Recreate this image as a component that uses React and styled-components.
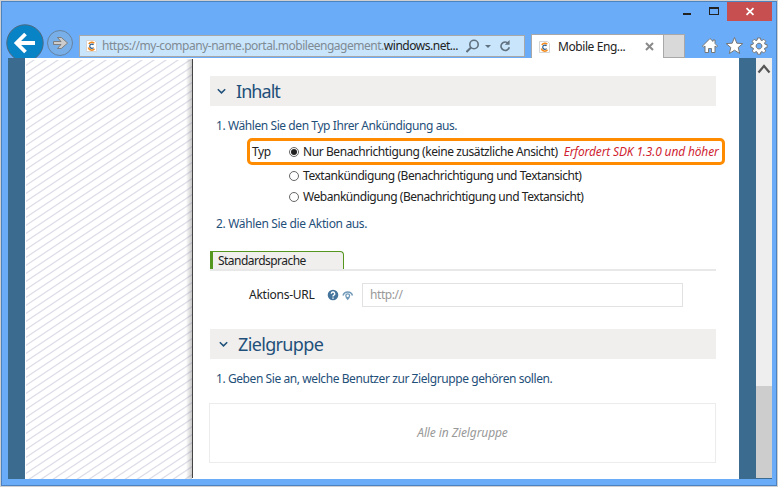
import React from 'react';
import styled, { createGlobalStyle } from 'styled-components';

const Global = createGlobalStyle`
  * { box-sizing: border-box; }
  body { margin: 0; font-family: "Noto Sans", "Open Sans", sans-serif; font-size: 12px; color: #222; }
`;

const Window = styled.div`
  width: 778px; height: 487px; display: flex; flex-direction: column;
  background: #6aacf7; border: 1px solid #d0d0d0; outline: 1px solid #4c82c0; outline-offset: -2px;
  overflow: hidden;
`;
const TitleBar = styled.div`
  height: 20px; display: flex; justify-content: flex-end; padding-right: 5px; flex: none;
`;
const WinButton = styled.div`
  width: ${p => p.$w}px; height: 20px; background: ${p => p.$bg || 'transparent'};
  svg { display: block; }
`;
const NavBar = styled.div`
  height: 37px; display: flex; flex: none; align-items: flex-start;
`;
const NavButtons = styled.svg`display: block; width: 78px; height: 37px; flex: none;`;
const AddressBar = styled.div`
  margin-top: 14px; width: 446px; height: 22px; background: #c9e5fc; border: 1px solid #a8a8a8;
  display: flex; align-items: center; padding-left: 6px; flex: none;
  svg { flex: none; }
`;
const Url = styled.div`width: 364px; margin-left: 5px; white-space: nowrap; flex: none;`;
const Host = styled.span`color: #222;`;
const BrowserTab = styled.div`
  margin: 13px 0 0 6px; width: 133px; height: 24px; background: #fff; border: 1px solid #a8a8a8; border-bottom: 0;
  display: flex; align-items: center; padding-left: 7px; flex: none;
`;
const TabTitle = styled.div`width: 95px; padding-left: 8px; flex: none;`;
const NewTab = styled.div`flex: none; margin-top: 13px; width: 21px; height: 24px; background: #d9d9d9; border: 1px solid #a8a8a8; border-left: 0;`;
const Tools = styled.svg`display: block; width: 70px; height: 20px; margin: 15px 0 0 15px; flex: none;`;

const Text = styled.span`
  font-size: ${p => p.$size || 12}px; letter-spacing: ${p => p.$ls ?? -0.42}px; color: ${p => p.$color || '#222'};
  font-style: ${p => (p.$italic ? 'italic' : 'normal')}; white-space: nowrap; line-height: 18px;
`;
const Requirement = styled(Text)`margin-left: 6px;`;

const Viewport = styled.div`height: 421px; margin: 0 5px 0 7px; display: flex; flex: none;`;
const SideBand = styled.div`width: 17px; background: #3b6c8f; flex: none;`;
const Hatch = styled.svg`display: block; width: 168px; height: 421px; background: #fff; flex: none;`;
const Page = styled.main`width: 546px; background: #fff; padding: 18px 0 0 17px; flex: none;`;
const SectionHead = styled.div`
  width: 506px; height: 30px; margin-top: ${p => p.$top || 0}px; background: #f0efee;
  display: flex; align-items: center; padding-left: ${p => p.$pad}px; gap: 10px;
  svg { flex: none; }
`;
const Step = styled.div`height: 18px; margin: ${p => p.$m}; display: flex;`;
const Options = styled.div`width: 478px; margin-left: 37px;`;
const Option = styled.label`
  height: 21px; display: flex; align-items: center; padding-left: 42px; gap: 4px;
`;
const Highlight = styled.div`
  height: 27px; border: 3px solid #ff8c00; border-radius: 5px; display: flex; align-items: center; padding-left: 2px;
`;
const TypeLabel = styled.div`width: 37px; display: flex; flex: none;`;
const Radio = styled.span`
  width: 10px; height: 10px; border: 1px solid #666; border-radius: 50%; flex: none; display: flex; margin-right: ${p => p.$gap || 0}px;
  &::before { content: ''; margin: auto; width: 6px; height: 6px; border-radius: 50%; background: ${p => (p.$on ? '#222' : 'transparent')}; }
`;
const LangTabs = styled.div`width: 506px; height: 20px; border-bottom: 2px solid #e9e8e8; margin-top: 18px;`;
const LangTab = styled.div`
  width: 134px; height: 18px; background: #f0efee; border: 1px solid #55961f; border-left-width: 3px; border-bottom: 0;
  border-top-right-radius: 4px; padding-left: 5px; display: flex;
`;
const Field = styled.div`height: 25px; margin: 11px 0 0 39px; display: flex; align-items: center;`;
const FieldLabel = styled.div`width: 78px; display: flex;`;
const Input = styled.div`width: 321px; height: 24px; margin-left: 8px; border: 1px solid #e2e2e2; padding-left: 7px; display: flex; align-items: center;`;
const Audience = styled.div`width: 507px; height: 60px; margin-left: -1px; border: 1px solid #ececec; display: flex; align-items: center; justify-content: center;`;
const ScrollBar = styled.div`width: 16px; height: 421px; background: #eee; display: flex; flex: none; flex-direction: column; justify-content: space-between;`;
const Thumb = styled.div`height: 93px; background: #cdcdcd; border-bottom: 1px solid #3b6c8f;`;

const NAVY = '#1f507a';

const Favicon = () => (
  <svg width="11" height="12" viewBox="0 0 11 12">
    <path d="M.5.5h8l2 2v9H.5z" fill="#fff" stroke="#d5d5d5" />
    <path d="M8.3 3.3A3.5 3.5 0 0 0 2.8 4M2.3 7.500A3.5 3.5 0 0 0 8.5 8.7" fill="none" stroke="#f28a1c" strokeWidth="1.5" />
    <path d="M7.5 4.9A2.1 2.1 0 1 0 7.5 7.5" fill="none" stroke="#295b8c" strokeWidth="1.2" />
  </svg>
);
const Chevron = () => (
  <svg width="9" height="7" viewBox="0 0 9 7"><path d="M.8 1.2l3.7 3.7 3.7-3.7" fill="none" stroke={NAVY} strokeWidth="1.5" /></svg>
);

export default function App() {
  return (
    <Window>
      <Global />
      <TitleBar>
        <WinButton $w={38}><svg width="38" height="20"><path d="M19 12h8v2h-8z" fill="#222" /></svg></WinButton>
        <WinButton $w={25}><svg width="25" height="20"><path d="M7 6h10v8H7zM8 8v5h8V8z" fillRule="evenodd" fill="#222" /></svg></WinButton>
        <WinButton $w={45} $bg="#c74f50"><svg width="45" height="20"><path d="M19.5 7.2l7 6.6m0-6.6l-7 6.6" stroke="#fff" strokeWidth="1.8" /></svg></WinButton>
      </TitleBar>
      <NavBar>
        <NavButtons viewBox="0 0 78 37">
          <circle cx="24" cy="22" r="18.2" fill="#0783c6" stroke="#4e6a80" />
          <path d="M34 22H16M24.5 13l-9 9 9 9" fill="none" stroke="#fff" strokeWidth="3.8" />
          <circle cx="59" cy="22" r="12.5" fill="#78afe8" stroke="#66839f" />
          <path d="M52.5 20.500h7.500l-3.500-4h3.800l6.300 5.500-6.300 5.500h-3.800l3.500-4h-7.500z" fill="#ccc" stroke="#777" strokeWidth=".9" />
        </NavButtons>
        <AddressBar>
          <Favicon />
          <Url><Text $color="#7f8b94" $ls={-0.48}>https://my-company-name.portal.mobileengagement.<Host>windows.net...</Host></Text></Url>
          <svg width="46" height="18" viewBox="0 0 46 18" fill="none" stroke="#60717f">
            <circle cx="8" cy="7.5" r="4.2" strokeWidth="1.6" /><path d="M5 10.500l-4.500 4.500" strokeWidth="2" />
            <path d="M19 8h6l-3 3z" fill="#60717f" stroke="none" />
            <path d="M42.300 6.400a4.200 4.200 0 1 0 1 3.800" strokeWidth="1.600" /><path d="M43.600 3v4.800h-4.800z" fill="#60717f" stroke="none" />
          </svg>
        </AddressBar>
        <BrowserTab>
          <Favicon />
          <TabTitle><Text $ls={-0.42}>Mobile Eng...</Text></TabTitle>
          <svg width="9" height="9" viewBox="0 0 9 9"><path d="M1 1l7 7m0-7L1 8" stroke="#8a8a8a" strokeWidth="2" /></svg>
        </BrowserTab>
        <NewTab />
        <Tools viewBox="0 0 70 20" fill="#fff" stroke="#777" strokeWidth="1">
          <path d="M2.500 10L10 2.500l3 2.900V4h2v3.500L17.500 10l-1 1.200L15 10v6.500h-3.500v-4h-3v4H5V10l-1.500 1.200z" />
          <path d="M34.500 1.500l2.300 5.700 6 .4-4.600 3.900 1.500 6-5.200-3.300-5.200 3.300 1.500-6-4.600-3.900 6-.4z" />
          <path fillRule="evenodd" d="M57.500 2h3l.4 2.200 1 .4 1.900-1.300 2 2-1.300 1.900.4 1 2.200.4v3l-2.200.4-.4 1 1.300 1.900-2 2-1.900-1.300-1 .4-.4 2.200h-3l-.4-2.200-1-.4-1.900 1.300-2-2 1.300-1.900-.4-1-2.200-.4v-3l2.200-.4.4-1-1.300-1.900 2-2 1.900 1.300 1-.4zM59 7.200a2.900 2.900 0 1 0 .01 0z" />
        </Tools>
      </NavBar>
      <Viewport>
        <SideBand />
        <Hatch>
          <defs>
            <pattern id="hatch" width="12" height="8" patternUnits="userSpaceOnUse">
              <path d="M-3 10L15 -2M-9 6L3 -2M9 10L21 2" stroke="#dedee9" strokeWidth="1.4" />
            </pattern>
            <linearGradient id="edge"><stop offset="0" stopColor="#777" stopOpacity="0" /><stop offset="1" stopColor="#777" stopOpacity=".4" /></linearGradient>
          </defs>
          <rect x="1" y="2" width="166" height="419" fill="url(#hatch)" />
          <rect x="161" y="1" width="6" height="420" fill="url(#edge)" />
          <rect x="167" y="1" width="1" height="419" fill="#444" />
        </Hatch>
        <Page>
          <SectionHead $pad={7}><Chevron /><Text $size={18} $ls={-0.95} $color={NAVY}>Inhalt</Text></SectionHead>
          <Step $m="11px 0 3px 6px"><Text $color={NAVY}>1. Wählen Sie den Typ Ihrer Ankündigung aus.</Text></Step>
          <Options>
            <Highlight>
              <TypeLabel><Text>Typ</Text></TypeLabel>
              <Radio $on $gap={4} />
              <Text>Nur Benachrichtigung (keine zusätzliche Ansicht)</Text>
              <Requirement $italic $ls={-0.15} $color="#d01f32">Erfordert SDK 1.3.0 und höher</Requirement>
            </Highlight>
            <Option><Radio /><Text $ls={-0.45}>Textankündigung (Benachrichtigung und Textansicht)</Text></Option>
            <Option><Radio /><Text $ls={-0.46}>Webankündigung (Benachrichtigung und Textansicht)</Text></Option>
          </Options>
          <Step $m="8px 0 0 6px"><Text $ls={-0.34} $color={NAVY}>2. Wählen Sie die Aktion aus.</Text></Step>
          <LangTabs><LangTab><Text $ls={-0.53}>Standardsprache</Text></LangTab></LangTabs>
          <Field>
            <FieldLabel><Text $ls={-0.25}>Aktions-URL</Text></FieldLabel>
            <svg width="27" height="12" viewBox="0 0 27 12">
              <circle cx="6" cy="6" r="5.3" fill="#45759c" />
              <path d="M4.300 4.700a1.700 1.700 0 1 1 2.500 1.500q-.8.4-.8 1.200M6 8.500v1.300" stroke="#fff" strokeWidth="1.4" fill="none" />
              <path d="M16 6.500a5 5 0 0 1 9.500 0" fill="none" stroke="#7199b8" strokeWidth="1.5" />
              <path d="M20.700 4.200a2.500 2.500 0 0 1 2.500 2.500q0 1.800-2.500 4.500-2.500-2.700-2.500-4.500a2.500 2.500 0 0 1 2.500-2.500z" fill="#6f98b8" />
              <circle cx="20.7" cy="6.8" r="1.2" fill="#fff" />
            </svg>
            <Input><Text $color="#999">http://</Text></Input>
          </Field>
          <SectionHead $pad={9} $top={22}><Chevron /><Text $size={18} $ls={-0.65} $color={NAVY}>Zielgruppe</Text></SectionHead>
          <Step $m="11px 0 15px 6px"><Text $color={NAVY}>1. Geben Sie an, welche Benutzer zur Zielgruppe gehören sollen.</Text></Step>
          <Audience><Text $italic $ls={-0.1} $color="#999">Alle in Zielgruppe</Text></Audience>
        </Page>
        <SideBand />
        <ScrollBar>
          <svg width="16" height="22" viewBox="0 0 16 22"><path d="M2.500 14.500L8 8l5.500 6.500" fill="none" stroke="#555" strokeWidth="2.2" /></svg>
          <Thumb />
        </ScrollBar>
      </Viewport>
    </Window>
  );
}
